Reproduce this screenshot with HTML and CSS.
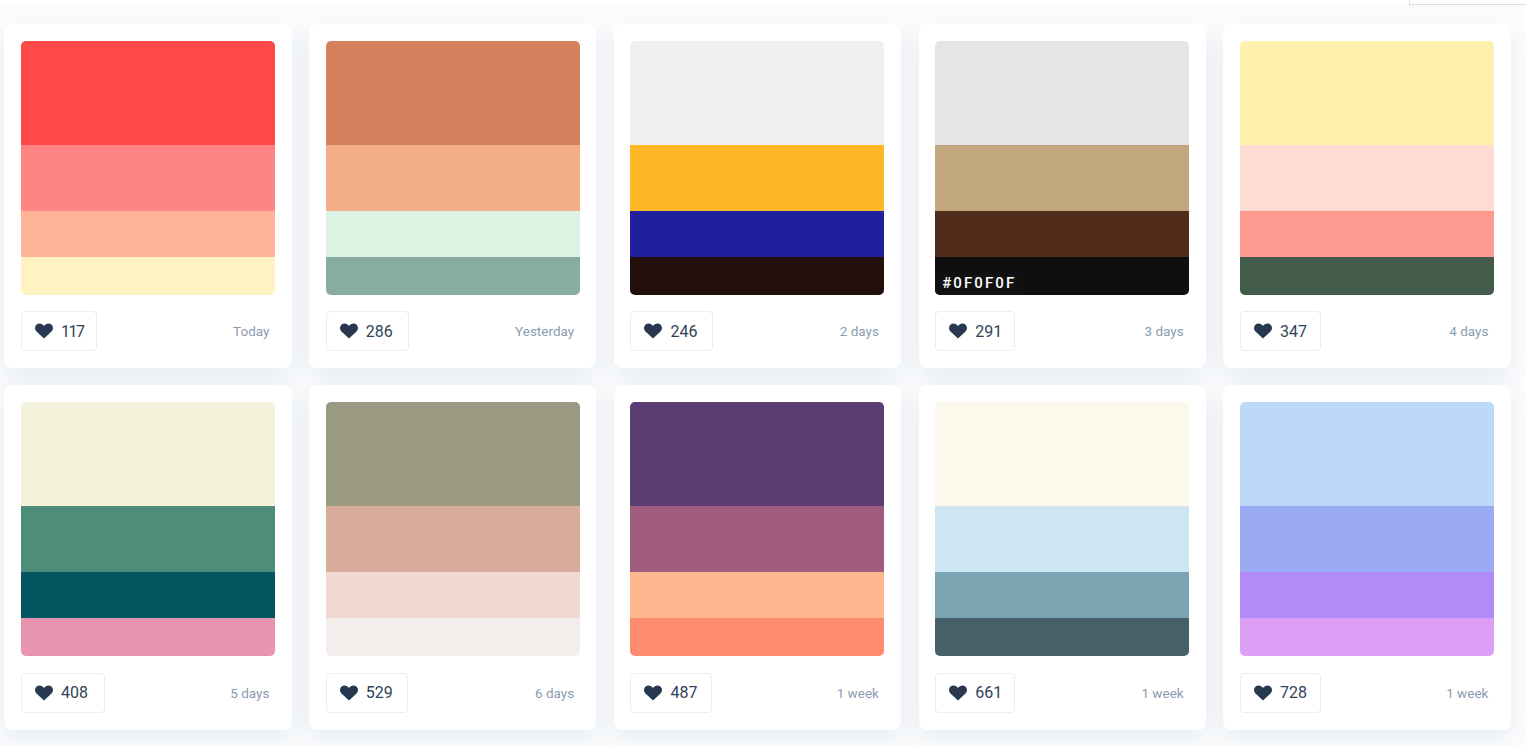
FILE: index.html
```html
<!DOCTYPE html>
<html lang="en">
<head>
<meta charset="utf-8">
<title>Color Palettes</title>
<link rel="stylesheet" href="styles.css">
</head>
<body>
<svg class="defs" width="0" height="0"><symbol id="heart" viewBox="0 0 18 16"><path d="M9 15.6 2 8.9C.6 7.6 0 6.4 0 5 0 2.2 2.1.4 4.6.4 6.300.4 8 1.300 9 3 10 1.300 11.700.4 13.400.4 15.900.4 18 2.200 18 5c0 1.400-.6 2.600-2 3.900z"/></symbol></svg>
<header class="topbar"><div class="topbox"></div></header>
<main class="grid">
<article class="card"><div class="palette"><div class="s1 c-ff4848"></div><div class="s2 c-ff8484"></div><div class="s3 c-ffb396"></div><div class="s4 c-fff3c1"></div></div><footer class="foot"><button class="like w76"><svg class="heart"><use href="#heart"/></svg><span>117</span></button><time class="date">Today</time></footer></article>
<article class="card"><div class="palette"><div class="s1 c-d6815e"></div><div class="s2 c-f3ae88"></div><div class="s3 c-dcf3e3"></div><div class="s4 c-87aca0"></div></div><footer class="foot"><button class="like w83"><svg class="heart"><use href="#heart"/></svg><span>286</span></button><time class="date">Yesterday</time></footer></article>
<article class="card"><div class="palette"><div class="s1 c-efefef"></div><div class="s2 c-feb726"></div><div class="s3 c-20209c"></div><div class="s4 c-23100a"></div></div><footer class="foot"><button class="like w83"><svg class="heart"><use href="#heart"/></svg><span>246</span></button><time class="date">2 days</time></footer></article>
<article class="card"><div class="palette"><div class="s1 c-e5e5e5"></div><div class="s2 c-c3a77f"></div><div class="s3 c-522c1b"></div><div class="s4 c-0f0f0f"><span class="hex">#0F0F0F</span></div></div><footer class="foot"><button class="like w80"><svg class="heart"><use href="#heart"/></svg><span>291</span></button><time class="date">3 days</time></footer></article>
<article class="card"><div class="palette"><div class="s1 c-fef1ae"></div><div class="s2 c-fedcd3"></div><div class="s3 c-ff9a90"></div><div class="s4 c-425b4b"></div></div><footer class="foot"><button class="like w81"><svg class="heart"><use href="#heart"/></svg><span>347</span></button><time class="date">4 days</time></footer></article>
<article class="card"><div class="palette"><div class="s1 c-f3f2da"></div><div class="s2 c-4f8d7b"></div><div class="s3 c-03565f"></div><div class="s4 c-e994ae"></div></div><footer class="foot"><button class="like w84"><svg class="heart"><use href="#heart"/></svg><span>408</span></button><time class="date">5 days</time></footer></article>
<article class="card"><div class="palette"><div class="s1 c-9a9a82"></div><div class="s2 c-d7ac9b"></div><div class="s3 c-efd9d2"></div><div class="s4 c-f3eeeb"></div></div><footer class="foot"><button class="like w82"><svg class="heart"><use href="#heart"/></svg><span>529</span></button><time class="date">6 days</time></footer></article>
<article class="card"><div class="palette"><div class="s1 c-5a3d72"></div><div class="s2 c-a05c7f"></div><div class="s3 c-ffb78f"></div><div class="s4 c-ff8c6f"></div></div><footer class="foot"><button class="like w82"><svg class="heart"><use href="#heart"/></svg><span>487</span></button><time class="date">1 week</time></footer></article>
<article class="card"><div class="palette"><div class="s1 c-fcf9ec"></div><div class="s2 c-cee6f1"></div><div class="s3 c-7ba4b2"></div><div class="s4 c-456068"></div></div><footer class="foot"><button class="like w80"><svg class="heart"><use href="#heart"/></svg><span>661</span></button><time class="date">1 week</time></footer></article>
<article class="card"><div class="palette"><div class="s1 c-bdd9f8"></div><div class="s2 c-9aabf3"></div><div class="s3 c-b18bf7"></div><div class="s4 c-dba0f5"></div></div><footer class="foot"><button class="like w81"><svg class="heart"><use href="#heart"/></svg><span>728</span></button><time class="date">1 week</time></footer></article>
</main>
</body>
</html>
```
FILE: styles.css
```css
* { box-sizing: border-box; }
html, body { margin: 0; height: 100%; overflow: hidden; }
body { background: #fcfdfe; font-family: Roboto, "Open Sans", sans-serif; color: #2f4358; }
.defs { position: absolute; }
.topbar { height: 4px; background: #fff; box-shadow: 0 2px 14px rgba(42, 80, 130, .08); display: flex; justify-content: flex-end; position: relative; }
.topbox { width: 117px; height: 5px; background: #fff; border-left: 1px solid #ddd; border-bottom: 1px solid #ddd; }
.grid { display: grid; grid-template-columns: repeat(5, 287.25px); column-gap: 17.5px; row-gap: 17px; align-content: start; padding: 20px 0 0 4.4px; }
.card { background: #fff; border-radius: 8px; padding: 17px 16.5px; height: 344.4px; box-shadow: 0 8px 26px rgba(50, 85, 130, .11); }
.palette { width: 254px; height: 254px; border-radius: 5px; overflow: hidden; display: flex; flex-direction: column; }
.s1 { height: 104px; }
.s2 { height: 66px; }
.s3 { height: 46px; }
.s4 { height: 38px; display: flex; align-items: flex-end; }
.hex { color: #fff; font-size: 15px; font-weight: 500; letter-spacing: 2.1px; line-height: 20px; padding: 0 7px 2px; background: #111; }
.foot { width: 254px; display: flex; justify-content: space-between; align-items: center; margin-top: 16.3px; padding-right: 5.5px; }
.like { display: flex; align-items: center; gap: 8px; height: 40px; padding: 0 0 0 13px; background: #fff; border: 1px solid #e6eff8; border-radius: 4px; font: inherit; font-size: 16px; color: inherit; }
.heart { width: 18px; height: 16px; fill: #28394f; }
.date { font-size: 13.5px; color: #8b9bb2; }
.w76 { width: 76px; letter-spacing: -1.4px; } .w80 { width: 80px; } .w81 { width: 81px; } .w82 { width: 82px; } .w83 { width: 83px; } .w84 { width: 84px; }
.c-ff4848 { background: #ff4848; } .c-ff8484 { background: #ff8484; } .c-ffb396 { background: #ffb396; } .c-fff3c1 { background: #fff3c1; }
.c-d6815e { background: #d6815e; } .c-f3ae88 { background: #f3ae88; } .c-dcf3e3 { background: #dcf3e3; } .c-87aca0 { background: #87aca0; }
.c-efefef { background: #f0f0f0; } .c-feb726 { background: #feb726; } .c-20209c { background: #20209c; } .c-23100a { background: #23100a; }
.c-e5e5e5 { background: #e5e5e5; } .c-c3a77f { background: #c3a77f; } .c-522c1b { background: #522c1b; } .c-0f0f0f { background: #0f0f0f; }
.c-fef1ae { background: #fef1ae; } .c-fedcd3 { background: #fedcd3; } .c-ff9a90 { background: #ff9a90; } .c-425b4b { background: #425b4b; }
.c-f3f2da { background: #f3f2da; } .c-4f8d7b { background: #4f8d7b; } .c-03565f { background: #03565f; } .c-e994ae { background: #e994ae; }
.c-9a9a82 { background: #9a9a82; } .c-d7ac9b { background: #d7ac9b; } .c-efd9d2 { background: #efd9d2; } .c-f3eeeb { background: #f3eeeb; }
.c-5a3d72 { background: #5a3d72; } .c-a05c7f { background: #a05c7f; } .c-ffb78f { background: #ffb78f; } .c-ff8c6f { background: #ff8c6f; }
.c-fcf9ec { background: #fcf9ec; } .c-cee6f1 { background: #cee6f1; } .c-7ba4b2 { background: #7ba4b2; } .c-456068 { background: #456068; }
.c-bdd9f8 { background: #bdd9f8; } .c-9aabf3 { background: #9aabf3; } .c-b18bf7 { background: #b18bf7; } .c-dba0f5 { background: #dba0f5; }
```
